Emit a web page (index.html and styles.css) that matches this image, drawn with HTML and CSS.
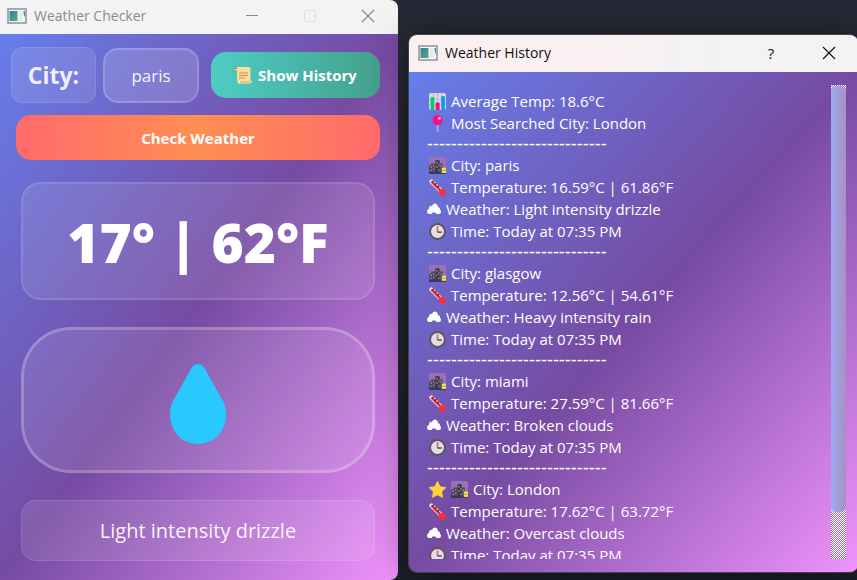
FILE: index.html
```html
<!DOCTYPE html>
<html lang="en">
<head>
<meta charset="utf-8">
<title>Weather Checker</title>
<link rel="stylesheet" href="styles.css">
</head>
<body>
<svg class="defs" aria-hidden="true">
  <defs>
    <linearGradient id="pane" x1="0" y1="0" x2="1" y2="1"><stop offset="0" stop-color="#3f74a5"/><stop offset="1" stop-color="#54b078"/></linearGradient>
  </defs>
  <symbol id="app" viewBox="0 0 20 16"><path d="M1 1h18v14H1z" fill="#f4f7f8" stroke="#8b9298" stroke-width="1.500"/><path d="M2.500 3h8v10h-8z" fill="url(#pane)"/><path d="M12 3h3.500v10H12z" fill="#e6eaeb"/><path d="M16.500 3H18v6q-1.500-1-1.500-6z" fill="#4d93a0"/></symbol>
  <symbol id="close" viewBox="0 0 14 14"><path d="M1 1l12 12M13 1L1 13" stroke="currentColor" stroke-width="1.200" fill="none"/></symbol>
  <symbol id="scroll" viewBox="0 0 18 18"><path d="M2 1h13q1.500 0 1.500 2v12H3V4H1q-1-2 1-3z" fill="#fddc9f"/><path d="M0 2.500Q0 1 1.500 1T4 3H0z" fill="#cf8840"/><path d="M5 7h9M5 9.500h9M5 12h6" stroke="#cf8840" stroke-width="1.100"/><path d="M4 15h14q0 2.500-2 2.500H5q-2 0-1-2.500z" fill="#ffe8bd"/><path d="M6 16h11" stroke="#cf8840" stroke-width=".8"/></symbol>
  <symbol id="chart" viewBox="0 0 16 16"><rect width="16" height="16" rx="2" fill="#ddd5e8"/><path d="M4 0v16M8 0v16M12 0v16M0 6h16M0 11h16" stroke="#b9b0ca" stroke-width=".8"/><path d="M1.500 4h3.500v12H1.500z" fill="#00cc65"/><path d="M6.300 9h3.700v7H6.300z" fill="#f50b86"/><path d="M11.500 3H15v13h-3.500z" fill="#00a5e8"/></symbol>
  <symbol id="pin" viewBox="0 0 16 16"><path d="M7.200 8h1.800v8H7.200z" fill="#a8aacb"/><circle cx="8" cy="4.800" r="4.700" fill="#ff0b88"/><circle cx="9.700" cy="3.200" r="1.300" fill="#ffc8e5"/></symbol>
  <symbol id="city" viewBox="0 0 16 16"><rect width="16" height="16" rx="2" fill="#9b70b7"/><path d="M0 8h2V6h4v10H0z" fill="#4b4568"/><path d="M6 3h4v13H6z" fill="#36364f"/><path d="M10 6h3v10h-3z" fill="#514a6c"/><path d="M0 14h16v2H0z" fill="#3c3b55"/><path d="M1.500 9h1v1h-1zM4 11h1v1H4zM1.500 12h1v1h-1zM7 5h1v1H7zM8.500 7h1v1h-1zM7 9h1v1H7zM8.500 12h1v1h-1zM4 8h1v1H4zM11 8h1v1h-1z" fill="#ead85a"/><path d="M12 10h4v5h-4z" fill="#f4e34b"/><path d="M12 12.500h4" stroke="#8f8050" stroke-width=".6"/></symbol>
  <symbol id="thermo" viewBox="0 0 16 16"><path d="M2.300 2.300l10 10" stroke="#f4d9e1" stroke-width="4" stroke-linecap="round"/><path d="M3 3l9.500 9.500" stroke="#e8283d" stroke-width="2.300" stroke-linecap="round"/><circle cx="12.500" cy="12.500" r="3.200" fill="#fa3038"/><path d="M4.500 1.500L3 3M7 4L5.500 5.500M9.500 6.500L8 8" stroke="#39262d" stroke-width="1"/></symbol>
  <symbol id="cloud" viewBox="0 0 14 12"><path d="M2 11Q0 11 0 8.500T2 6Q1.500 4.500 2.700 3.500T5 3Q5.500.5 8 .5t3 3.500q2 0 2 2.500 1 .5 1 2.500t-2 2H9.500L8.500 9.500h-3L4.500 11z" fill="#fff"/></symbol>
  <symbol id="clock" viewBox="0 0 16 16"><circle cx="8" cy="8" r="7" fill="#e3dfe4" stroke="#5a565f" stroke-width="1.800"/><path d="M8 3v5.500" stroke="#df6878" stroke-width="1.600"/><path d="M8 8.500h4" stroke="#36313c" stroke-width="1.200"/></symbol>
  <symbol id="star" viewBox="0 0 16 16"><path d="M8 .8l2.200 4.700 5.200.7-3.800 3.600.9 5.300L8 12.600l-4.500 2.500.9-5.300L.6 6.200l5.200-.7z" fill="#ffd33b" stroke="#ffd33b" stroke-width="1.200" stroke-linejoin="round"/></symbol>
</svg>

<main class="desktop">
  <section class="window checker" aria-label="Weather Checker">
    <header class="titlebar">
      <svg class="app-icon" aria-hidden="true"><use href="#app"/></svg>
      <h1 class="title">Weather Checker</h1>
      <div class="controls">
        <button class="control" aria-label="Minimize"><svg class="glyph" viewBox="0 0 14 14"><path d="M1 6.500h12" stroke="currentColor"/></svg></button>
        <button class="control" aria-label="Maximize" disabled><svg class="glyph" viewBox="0 0 14 14"><rect x="1.500" y="1.500" width="11" height="11" rx="1" fill="none" stroke="currentColor"/></svg></button>
        <button class="control" aria-label="Close"><svg class="glyph"><use href="#close"/></svg></button>
      </div>
    </header>
    <div class="body">
      <form class="search" onsubmit="return false">
        <div class="search-row">
          <label class="city-label" for="city-input">City:</label>
          <input class="city-input" id="city-input" type="text" value="paris">
          <button class="button history-button" type="button"><svg class="button-icon" aria-hidden="true"><use href="#scroll"/></svg>Show History</button>
        </div>
        <button class="button check-button" type="submit">Check Weather</button>
      </form>
      <div class="results">
        <div class="card temperature">17° | 62°F</div>
        <div class="card condition">
          <svg class="drop" viewBox="0 0 58 80" role="img" aria-label="Rain drop"><path d="M22.500 4Q25 0 29 0t6.500 4L54.500 38Q57 43 57 51c0 11-6 21-15 26q-6 3-13 3t-13-3C7 72 1 62 1 51q0-8 2.500-13z" fill="#29c8ff"/></svg>
        </div>
        <div class="card description">Light intensity drizzle</div>
      </div>
    </div>
  </section>

  <section class="window history" aria-label="Weather History">
    <header class="titlebar">
      <svg class="app-icon" aria-hidden="true"><use href="#app"/></svg>
      <h2 class="title">Weather History</h2>
      <div class="controls">
        <button class="control">?</button>
        <button class="control" aria-label="Close"><svg class="glyph"><use href="#close"/></svg></button>
      </div>
    </header>
    <div class="log">
      <div class="entries">
        <div class="entry">
          <p class="line"><svg class="emoji"><use href="#chart"/></svg>Average Temp: 18.6°C</p>
          <p class="line"><svg class="emoji"><use href="#pin"/></svg>Most Searched City: London</p>
          <p class="rule">------------------------------</p>
        </div>
        <div class="entry">
          <p class="line"><svg class="emoji"><use href="#city"/></svg>City: paris</p>
          <p class="line"><svg class="emoji"><use href="#thermo"/></svg>Temperature: 16.59°C | 61.86°F</p>
          <p class="line"><svg class="cloud"><use href="#cloud"/></svg>Weather: Light intensity drizzle</p>
          <p class="line"><svg class="emoji"><use href="#clock"/></svg>Time: Today at 07:35 PM</p>
          <p class="rule">------------------------------</p>
        </div>
        <div class="entry">
          <p class="line"><svg class="emoji"><use href="#city"/></svg>City: glasgow</p>
          <p class="line"><svg class="emoji"><use href="#thermo"/></svg>Temperature: 12.56°C | 54.61°F</p>
          <p class="line"><svg class="cloud"><use href="#cloud"/></svg>Weather: Heavy intensity rain</p>
          <p class="line"><svg class="emoji"><use href="#clock"/></svg>Time: Today at 07:35 PM</p>
          <p class="rule">------------------------------</p>
        </div>
        <div class="entry">
          <p class="line"><svg class="emoji"><use href="#city"/></svg>City: miami</p>
          <p class="line"><svg class="emoji"><use href="#thermo"/></svg>Temperature: 27.59°C | 81.66°F</p>
          <p class="line"><svg class="cloud"><use href="#cloud"/></svg>Weather: Broken clouds</p>
          <p class="line"><svg class="emoji"><use href="#clock"/></svg>Time: Today at 07:35 PM</p>
          <p class="rule">------------------------------</p>
        </div>
        <div class="entry">
          <p class="line"><svg class="emoji"><use href="#star"/></svg><svg class="emoji"><use href="#city"/></svg>City: London</p>
          <p class="line"><svg class="emoji"><use href="#thermo"/></svg>Temperature: 17.62°C | 63.72°F</p>
          <p class="line"><svg class="cloud"><use href="#cloud"/></svg>Weather: Overcast clouds</p>
          <p class="line"><svg class="emoji"><use href="#clock"/></svg>Time: Today at 07:35 PM</p>
        </div>
      </div>
      <div class="scrollbar" aria-hidden="true"><div class="thumb"></div></div>
    </div>
  </section>
</main>
</body>
</html>
```
FILE: styles.css
```css
* { box-sizing: border-box; }

body {
  margin: 0;
  font-family: "Open Sans", "Noto Sans", sans-serif;
  font-size: 15px;
  color: #fff;
  background: #22252f;
}

button, input { font: inherit; color: inherit; margin: 0; }
h1, h2, p { margin: 0; font-weight: 400; }

.defs { position: absolute; width: 0; height: 0; }

.desktop {
  display: grid;
  grid-template-columns: minmax(0, 398fr) minmax(0, 449fr);
  gap: 11px;
  height: 100vh;
  margin-right: -1px;
  overflow: hidden;
  background: linear-gradient(#272a36, #20232c 60%, #1c2028);
}

.window {
  display: flex;
  flex-direction: column;
  overflow: hidden;
  border-radius: 8px;
}

.checker { border-top-left-radius: 0; border-bottom-left-radius: 0; }

.history {
  margin: 35px 0 8px;
  box-shadow: 0 0 0 1px #45444c, 0 4px 32px rgba(0, 0, 0, .5);
}

.titlebar {
  display: flex;
  align-items: center;
  flex: none;
  height: 34px;
  padding: 0 1px 3px 7px;
  background: #f3f3f3;
  color: #8c8c8c;
}

.history .titlebar {
  height: 37px;
  padding: 0 0 1px 9px;
  background: linear-gradient(90deg, #faf0f2 40%, #f3f3f3 70%);
  color: #111;
}

.app-icon { width: 20px; height: 16px; margin-right: 7px; }
.title { font-size: 14px; line-height: 20px; }
.controls { display: flex; margin-left: auto; }

.control {
  display: grid;
  place-items: center;
  width: 58px;
  height: 28px;
  padding: 0;
  border: 0;
  background: none;
}

.control:disabled { color: #dedede; }
.glyph { width: 14px; height: 14px; }

.body, .log {
  flex: 1;
  min-height: 0;
  background: linear-gradient(to bottom right, #667eea, #764ba2 50%, #f093fb);
}

.body { padding: 13px 18px 19px 11px; }

.search-row { display: flex; align-items: center; }

.city-label {
  flex: none;
  width: 85px;
  padding: 10px 0;
  border: 1px solid rgba(255, 255, 255, .2);
  border-radius: 12px;
  background: rgba(255, 255, 255, .1);
  background-clip: padding-box;
  color: rgba(255, 255, 255, .9);
  font-size: 23px;
  font-weight: 700;
  line-height: 34px;
  text-align: center;
}

.city-input {
  flex: none;
  width: 96px;
  height: 55px;
  margin: 0 12px 0 7px;
  padding: 0 10px;
  border: 2px solid rgba(255, 255, 255, .3);
  border-radius: 15px;
  background: rgba(255, 255, 255, .15);
  background-clip: padding-box;
  color: rgba(255, 255, 255, .95);
  font-size: 17px;
  text-align: center;
}

.button {
  display: flex;
  align-items: center;
  justify-content: center;
  height: 46px;
  padding: 0;
  border: 0;
  border-radius: 15px;
  font-size: 15px;
  font-weight: 700;
}

.history-button {
  flex: 1;
  background: linear-gradient(90deg, #4ecdc4, #44a08d);
}

.button-icon { width: 18px; height: 18px; margin-right: 6px; }

.check-button {
  width: calc(100% - 5px);
  height: 45px;
  margin: 12px 0 0 5px;
  background: linear-gradient(90deg, #ff6b6b, #ff8e53 50%, #ff6b6b);
}

.results {
  display: grid;
  gap: 27px;
  margin: 22px 5px 0 10px;
}

.card {
  display: grid;
  place-items: center;
  border: 1px solid rgba(255, 255, 255, .2);
  border-radius: 15px;
  background: rgba(255, 255, 255, .1);
  background-clip: padding-box;
}

.temperature {
  padding: 21px 0 19px;
  border-width: 2px;
  border-radius: 20px;
  font-size: 55px;
  font-weight: 800;
  line-height: 74px;
}

.condition {
  padding: 34px 0 26px;
  border: 3px solid rgba(255, 255, 255, .3);
  border-radius: 50px;
}

.drop { width: 58px; height: 80px; }

.description {
  padding: 15px 0 14px;
  color: rgba(255, 255, 255, .95);
  font-size: 20px;
  font-weight: 500;
  line-height: 30px;
}

.log {
  display: flex;
  padding: 13px 12px 13px 18px;
}

.entries {
  flex: 1;
  padding-top: 5px;
  overflow: hidden;
}

.line {
  display: flex;
  align-items: center;
  height: 22px;
  line-height: 22px;
  white-space: nowrap;
}

.rule {
  height: 20px;
  font-family: "Liberation Sans", sans-serif;
  font-size: 18px;
  line-height: 20px;
}

.emoji { flex: none; width: 17px; height: 17px; margin: 0 5px 0 2px; }
.emoji + .emoji { margin-left: 0; }
.cloud { flex: none; width: 14px; height: 12px; margin-right: 5px; }

.scrollbar {
  width: 15px;
  border-top: 1px dotted #fff;
  background: repeating-conic-gradient(#fff 0 25%, #a070b8 0 50%) 0 0 / 2px 2px;
}

.thumb {
  height: 90%;
  border-radius: 6px;
  background: linear-gradient(90deg, #9daaf0, #a98fc4);
}
```
